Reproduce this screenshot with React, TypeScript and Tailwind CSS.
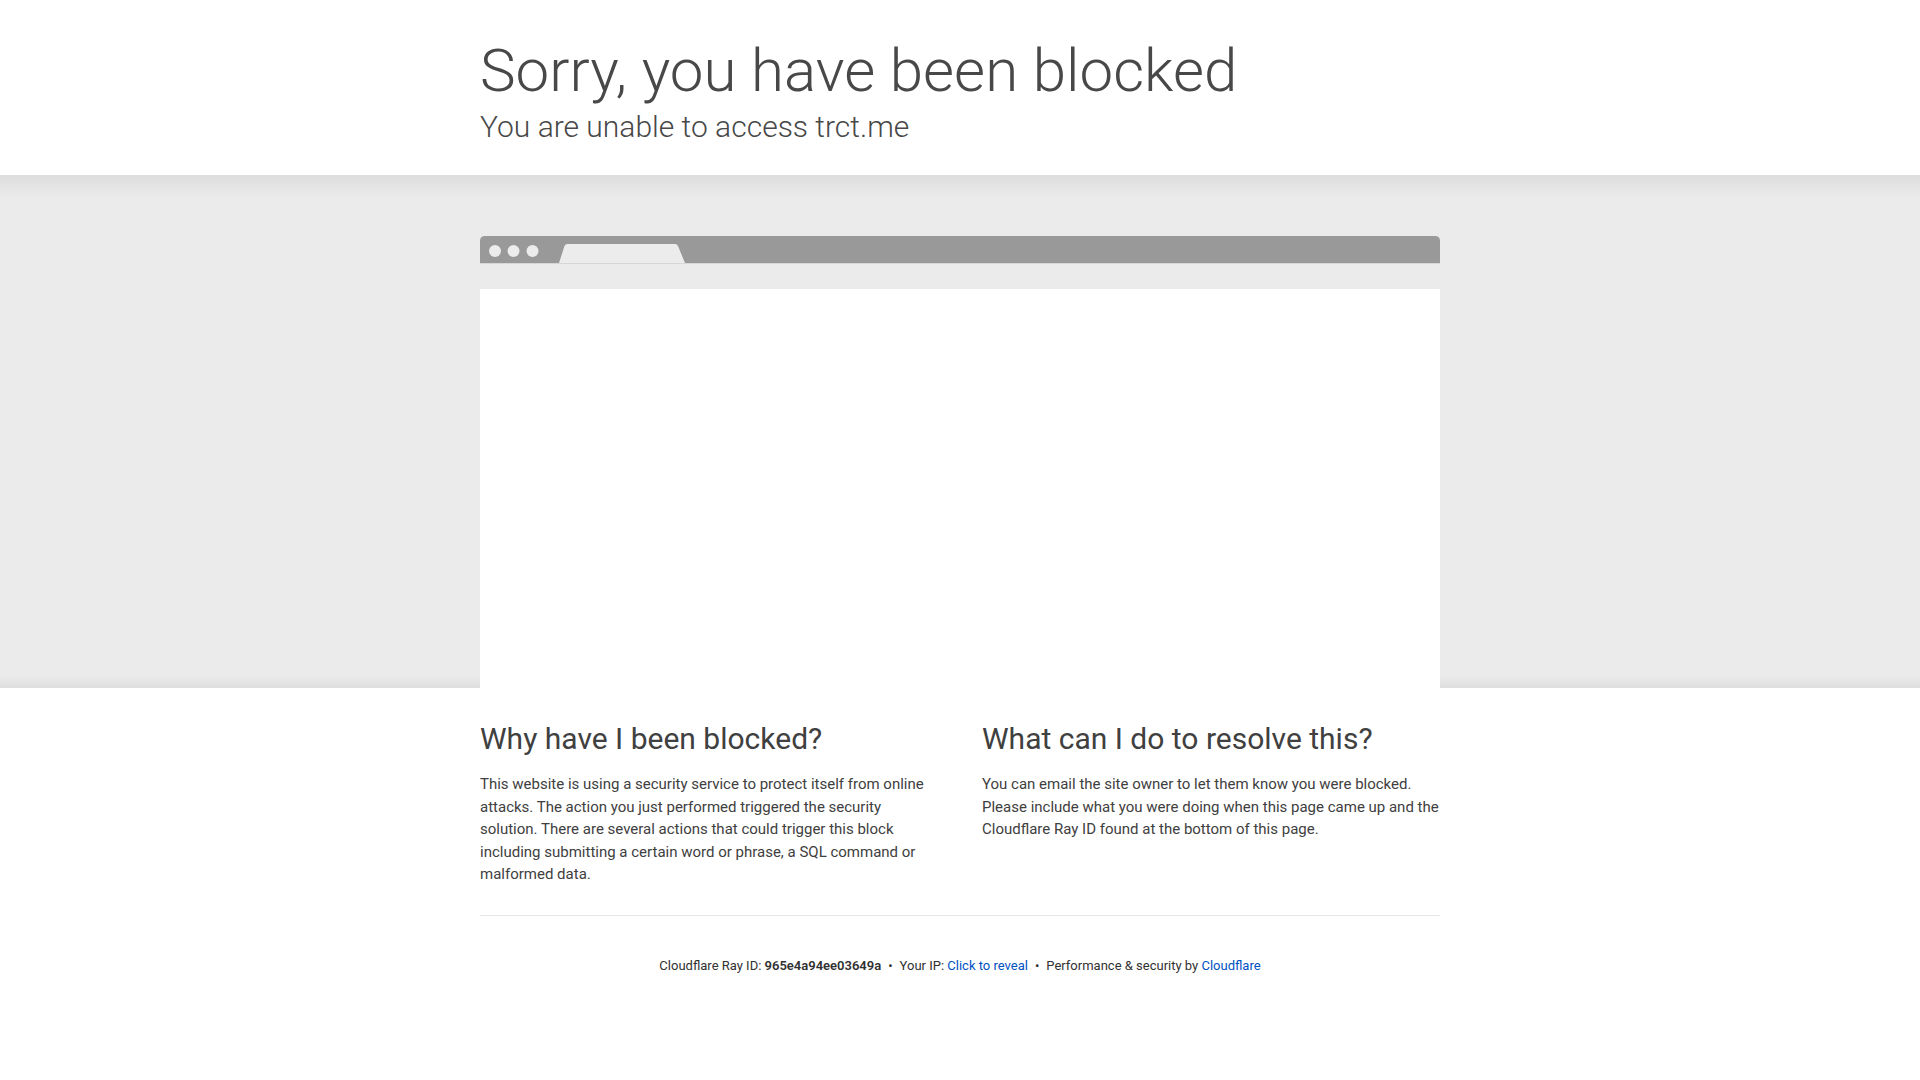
import React from 'react';

function BrowserBar() {
  return (
    <svg width="960" height="28" viewBox="0 0 960 28" className="block">
      <path d="M0 27 V5 Q0 0 5 0 H955 Q960 0 960 5 V27 Z" fill="#999999" />
      <circle cx="15" cy="15" r="6" fill="#ececec" />
      <circle cx="33.5" cy="15" r="6" fill="#ececec" />
      <circle cx="52.5" cy="15" r="6" fill="#ececec" />
      <path d="M79 27 L84.5 10 Q85.3 8 87.5 8 H195 Q197.2 8 198 10 L205 27 Z" fill="#ececec" />
      <rect x="0" y="27" width="960" height="1" fill="#d6d6d6" />
    </svg>
  );
}

export default function App() {
  return (
    <div className="min-h-screen bg-white font-['Roboto','Liberation_Sans',sans-serif] text-[#404040]">
      <header className="mx-auto h-[175px] w-[960px] pt-[35px] text-[#484848]">
        <h1 className="text-[60px] font-light leading-[72px]">Sorry, you have been blocked</h1>
        <h2 className="text-[30px] font-light leading-[39px]">You are unable to access trct.me</h2>
      </header>

      <div className="h-[513px] bg-[linear-gradient(#dddddd,#ebebeb_22px,#ebebeb_calc(100%_-_12px),#dedede)]">
        <div className="mx-auto flex h-full w-[960px] flex-col pt-[61px]">
          <BrowserBar />
          <div className="mt-[25px] flex-1 bg-white" />
        </div>
      </div>

      <section className="mx-auto grid w-[960px] grid-cols-2 gap-[44px] pt-[31px]">
        <div>
          <h2 className="mb-[15px] text-[30px] font-normal leading-[39px]">Why have I been blocked?</h2>
          <p className="text-[15px] leading-[22.5px]">
            This website is using a security service to protect itself from online attacks. The action you just
            performed triggered the security solution. There are several actions that could trigger this block
            including submitting a certain word or phrase, a SQL command or malformed data.
          </p>
        </div>
        <div>
          <h2 className="mb-[15px] text-[30px] font-normal leading-[39px]">What can I do to resolve this?</h2>
          <p className="text-[15px] leading-[22.5px]">
            You can email the site owner to let them know you were blocked. Please include what you were doing when
            this page came up and the Cloudflare Ray ID found at the bottom of this page.
          </p>
        </div>
      </section>

      <footer className="mx-auto mt-[29px] w-[960px] border-t border-[#e6e6e6] pt-[40px] text-center text-[13px] leading-[19.5px] text-[#313131]">
        <span>
          Cloudflare Ray ID: <strong className="font-semibold">965e4a94ee03649a</strong>
        </span>
        <span className="mx-[7px]">&bull;</span>
        <span>
          Your IP: <button className="cursor-pointer text-[#0051c3] hover:underline">Click to reveal</button>
        </span>
        <span className="mx-[7px]">&bull;</span>
        <span>
          Performance &amp; security by{' '}
          <a href="#" className="text-[#0051c3] hover:underline">
            Cloudflare
          </a>
        </span>
      </footer>
    </div>
  );
}
